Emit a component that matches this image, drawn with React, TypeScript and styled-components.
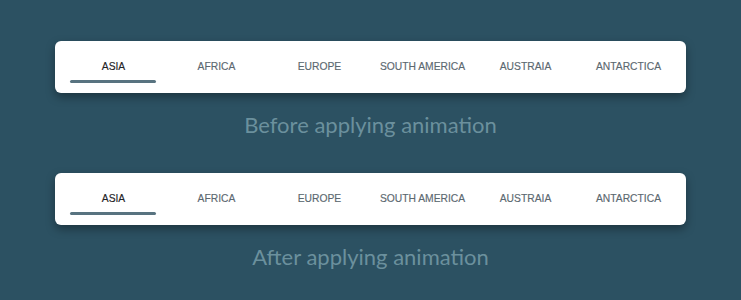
import styled, { createGlobalStyle } from "styled-components";

const GlobalStyle = createGlobalStyle`
  html, body {
    margin: 0;
    padding: 0;
    background: #2c5162;
  }
`;

const regions = ["ASIA", "AFRICA", "EUROPE", "SOUTH AMERICA", "AUSTRAIA", "ANTARCTICA"];

const Page = styled.div`
  width: 741px;
  height: 300px;
  box-sizing: border-box;
  padding-top: 41px;
  display: flex;
  flex-direction: column;
  align-items: center;
  background: #2c5162;
`;

const Demo = styled.section`
  display: flex;
  flex-direction: column;
  align-items: center;
  margin-bottom: 35px;
`;

const TabBar = styled.div`
  width: 631px;
  height: 52px;
  box-sizing: border-box;
  padding: 0 6px 0 7px;
  display: grid;
  grid-template-columns: repeat(6, 1fr);
  background: #ffffff;
  border-radius: 6px;
  box-shadow: 0 4px 10px rgba(0, 0, 0, 0.35);
`;

const Tab = styled.div<{ active?: boolean }>`
  position: relative;
  display: flex;
  align-items: center;
  justify-content: center;
  padding-bottom: 2px;
  font-family: "Liberation Sans", Arial, sans-serif;
  font-size: 10.3px;
  color: ${(p) => (p.active ? "#1f2326" : "#5b6870")};
  -webkit-text-stroke: 0.15px currentColor;
  cursor: pointer;
  user-select: none;
`;

const Indicator = styled.span`
  position: absolute;
  left: 8px;
  right: 9px;
  bottom: 10px;
  height: 3px;
  border-radius: 2px;
  background: #587380;
`;

const Caption = styled.div`
  margin-top: 19px;
  font-family: Lato, "Open Sans", sans-serif;
  font-size: 22px;
  color: #6b909d;
  line-height: 26px;
`;

const TabStrip = ({ selected }: { selected: number }) => (
  <TabBar>
    {regions.map((r, i) => (
      <Tab key={r} active={i === selected}>
        {r}
        {i === selected && <Indicator />}
      </Tab>
    ))}
  </TabBar>
);

export default function App() {
  return (
    <>
      <GlobalStyle />
      <Page>
        <Demo>
          <TabStrip selected={0} />
          <Caption>Before applying animation</Caption>
        </Demo>
        <Demo>
          <TabStrip selected={0} />
          <Caption>After applying animation</Caption>
        </Demo>
      </Page>
    </>
  );
}
